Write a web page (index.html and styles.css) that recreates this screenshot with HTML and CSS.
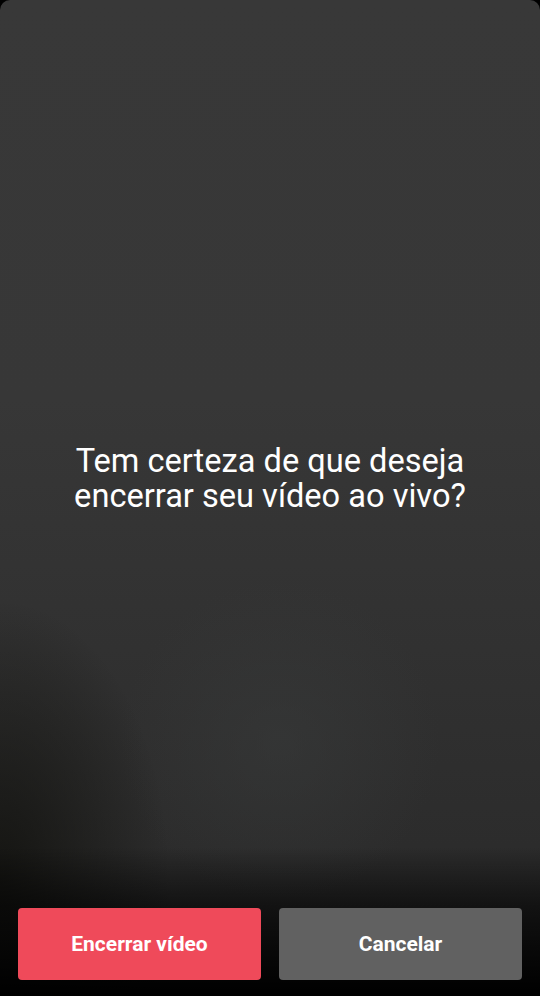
FILE: index.html
```html
<!DOCTYPE html>
<html lang="pt">
<head>
  <meta charset="UTF-8">
  <meta name="viewport" content="width=device-width, initial-scale=1.0">
  <title>Encerrar vídeo</title>
  <link rel="stylesheet" href="styles.css">
</head>
<body>
  <div class="screen">
    <main class="prompt">
      <p class="question">Tem certeza de que deseja<br>encerrar seu vídeo ao vivo?</p>
    </main>
    <footer class="actions">
      <button class="btn btn-end">Encerrar vídeo</button>
      <button class="btn btn-cancel">Cancelar</button>
    </footer>
  </div>
</body>
</html>
```

FILE: styles.css
```css
* {
  box-sizing: border-box;
}

html, body {
  margin: 0;
  height: 100%;
  background: #000;
}

.screen {
  height: 996px;
  width: 540px;
  display: flex;
  flex-direction: column;
  border-radius: 10px 10px 0 0;
  overflow: hidden;
  font-family: Roboto, 'Noto Sans', sans-serif;
  background:
    linear-gradient(to bottom, rgba(0,0,0,0) 0%, rgba(0,0,0,0) 85%, rgba(0,0,0,0.55) 91%, #000 100%),
    radial-gradient(ellipse 170px 280px at 0 880px, rgba(18,18,15,0.9), rgba(18,18,15,0) 100%),
    radial-gradient(ellipse 160px 160px at 280px 740px, rgba(56,58,58,0.55), rgba(56,58,58,0) 100%),
    linear-gradient(to bottom, #383838 0%, #373737 40%, #313131 65%, #2c2c2c 85%, #222 100%);
}

.prompt {
  flex-grow: 1;
  display: flex;
  align-items: center;
  justify-content: center;
  padding-top: 50px;
}

.question {
  margin: 0;
  color: #fff;
  font-size: 32.6px;
  line-height: 35px;
  text-align: center;
}

.actions {
  display: flex;
  gap: 18px;
  padding: 0 18px 16px;
}

.btn {
  flex: 1;
  height: 72px;
  border: none;
  border-radius: 4px;
  color: #fff;
  font-family: Roboto, 'Noto Sans', sans-serif;
  font-weight: bold;
  font-size: 21px;
}

.btn-end {
  background: #ef4a5a;
}

.btn-cancel {
  background: #616161;
}
```
